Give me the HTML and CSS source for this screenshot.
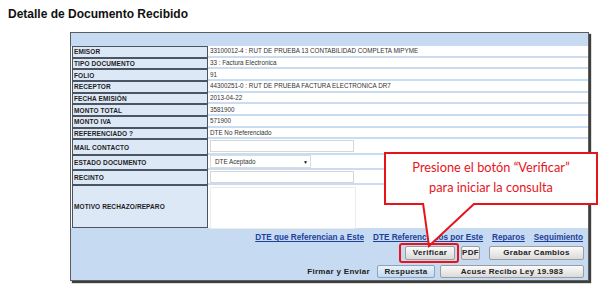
FILE: index.html
```html
<!DOCTYPE html>
<html lang="es">
<head>
    <meta charset="UTF-8">
    <title>Detalle de Documento Recibido</title>
    <link rel="stylesheet" href="styles.css">
</head>
<body>
    <div class="page">
        <h1 class="title">Detalle de Documento Recibido</h1>

        <div class="panel">
            <div class="panel-head"></div>
            <div class="detail">
                <div class="lbl">EMISOR</div>
                <div class="val">33100012-4 : RUT DE PRUEBA 13 CONTABILIDAD COMPLETA MIPYME</div>
                <div class="lbl">TIPO DOCUMENTO</div>
                <div class="val">33 : Factura Electronica</div>
                <div class="lbl">FOLIO</div>
                <div class="val">91</div>
                <div class="lbl">RECEPTOR</div>
                <div class="val">44300251-0 : RUT DE PRUEBA FACTURA ELECTRONICA DR7</div>
                <div class="lbl">FECHA EMISIÓN</div>
                <div class="val">2013-04-22</div>
                <div class="lbl">MONTO TOTAL</div>
                <div class="val">3581900</div>
                <div class="lbl">MONTO IVA</div>
                <div class="val">571900</div>
                <div class="lbl">REFERENCIADO ?</div>
                <div class="val">DTE No Referenciado</div>
                <div class="lbl">MAIL CONTACTO</div>
                <div class="val"><div class="field"></div></div>
                <div class="lbl">ESTADO DOCUMENTO</div>
                <div class="val">
                    <div class="select"><span>DTE Aceptado</span><span class="caret">▼</span></div>
                </div>
                <div class="lbl">RECINTO</div>
                <div class="val"><div class="field"></div></div>
                <div class="lbl">MOTIVO RECHAZO/REPARO</div>
                <div class="val val-top"><div class="area"></div></div>
            </div>

            <div class="panel-foot">
                <div class="links">
                    <a href="#">DTE que Referencian a Este</a>
                    <a href="#">DTE Referenciados por Este</a>
                    <a href="#">Reparos</a>
                    <a href="#">Seguimiento</a>
                </div>
                <div class="btn-row">
                    <button class="btn btn-verify">Verificar</button>
                    <button class="btn btn-pdf">PDF</button>
                    <button class="btn btn-save">Grabar Cambios</button>
                </div>
                <div class="btn-row btn-row-2">
                    <span class="sign-label">Firmar y Enviar</span>
                    <button class="btn btn-blue btn-reply">Respuesta</button>
                    <button class="btn btn-ack">Acuse Recibo Ley 19.983</button>
                </div>
            </div>
        </div>

        <!-- nota de ayuda sobre la captura -->
        <div class="callout">
            <p>Presione el botón “Verificar”</p>
            <p>para iniciar la consulta</p>
        </div>
        <svg class="callout-tail" width="60" height="46" viewBox="0 0 60 46">
            <polygon points="1,0 7,43 53,0" fill="#fff"/>
            <polyline points="1,0 7,43 53,0" fill="none" stroke="#e8141c" stroke-width="2"/>
        </svg>
        <div class="mark"></div>
    </div>
</body>
</html>
```

FILE: styles.css
```css
body, html {
    margin: 0;
    padding: 0;
    background: #fff;
    font-family: 'Liberation Sans', Arial, sans-serif;
    color: #222;
}
.page {
    position: relative;
    width: 600px;
    height: 292px;
}
.title {
    margin: 0;
    padding: 7px 0 0 8px;
    font-size: 12px;
    line-height: 14px;
    font-weight: bold;
    color: #111;
}
.panel {
    margin: 11px 0 0 70px;
    width: 517px;
    border: 1px solid #5c5c5c;
    box-shadow: 2px 2px 1px #3f3f3f;
    background: #c6dbf1;
}
.panel-head {
    height: 13px;
}
.detail {
    display: grid;
    grid-template-columns: 136px 1fr;
    grid-template-rows: repeat(8, 11.67px) 16px 15px 15px 43px;
    padding-left: 1px;
    background: #fff;
}
.lbl {
    box-sizing: border-box;
    border: 1px solid #4a5562;
    background: #dde8f6;
    font-size: 6.5px;
    font-weight: bold;
    letter-spacing: 0.1px;
    color: #1e1e1e;
    display: flex;
    align-items: center;
    padding-left: 1px;
    white-space: nowrap;
}
.val {
    box-sizing: border-box;
    border-bottom: 2px solid #c9dcf0;
    font-size: 6.3px;
    color: #333;
    display: flex;
    align-items: center;
    padding-left: 2px;
    white-space: nowrap;
}
.val-top {
    align-items: flex-start;
    border-bottom: none;
}
.field {
    box-sizing: border-box;
    width: 144px;
    height: 12px;
    border: 1px solid #d6d6d6;
    background: #fff;
}
.select {
    box-sizing: border-box;
    width: 101px;
    height: 13px;
    border: 1px solid #dcdcdc;
    background: #fff;
    display: flex;
    align-items: center;
    justify-content: space-between;
    padding: 0 2px 0 4px;
    font-size: 6.3px;
}
.caret {
    font-size: 5px;
    color: #111;
}
.area {
    box-sizing: border-box;
    width: 146px;
    height: 42px;
    margin-top: 2px;
    border: 1px solid #ececec;
    background: #fff;
}
.panel-foot {
    padding: 5px 4px 2px 0;
}
.links {
    display: flex;
    justify-content: flex-end;
    gap: 9px;
    height: 10px;
    line-height: 10px;
    padding-right: 1px;
}
.links a {
    font-size: 8.2px;
    font-weight: bold;
    color: #1f3f9c;
    text-decoration: underline;
}
.btn-row {
    display: flex;
    justify-content: flex-end;
    align-items: center;
    gap: 6px;
    margin-top: 3px;
}
.btn-row-2 {
    gap: 5px;
    margin-top: 5px;
}
.btn {
    box-sizing: border-box;
    height: 14px;
    padding: 0;
    border: 1px solid #9d9d9d;
    border-radius: 2px;
    background: linear-gradient(#fbfbfb, #dadada);
    font-family: 'Liberation Sans', Arial, sans-serif;
    font-size: 8px;
    font-weight: bold;
    letter-spacing: 0.3px;
    color: #222;
    line-height: 12px;
}
.btn-row-2 .btn {
    height: 13px;
}
.btn-blue {
    border-color: #8aa4bf;
    background: linear-gradient(#e9f2fb, #c4d9ef);
}
.btn-verify { width: 50px; }
.btn-pdf { width: 19px; margin-right: 3px; }
.btn-save { width: 95px; }
.btn-reply { width: 58px; }
.btn-ack { width: 144px; }
.sign-label {
    font-size: 8px;
    font-weight: bold;
    letter-spacing: 0.3px;
    color: #222;
    margin-right: 2px;
}

/* overlays */
.callout {
    position: absolute;
    left: 384px;
    top: 152px;
    width: 214px;
    height: 53px;
    box-sizing: border-box;
    border: 2px solid #e8141c;
    background: #fff;
    text-align: center;
    font-family: 'Lato', 'Open Sans', sans-serif;
    font-size: 12.8px;
    color: #e8141c;
    padding-top: 3px;
}
.callout p {
    margin: 0;
    line-height: 20px;
}
.callout-tail {
    position: absolute;
    left: 422px;
    top: 203px;
}
.mark {
    position: absolute;
    left: 399px;
    top: 243px;
    width: 60px;
    height: 20px;
    box-sizing: border-box;
    border: 2px solid #e8141c;
    border-radius: 3px;
}
```
